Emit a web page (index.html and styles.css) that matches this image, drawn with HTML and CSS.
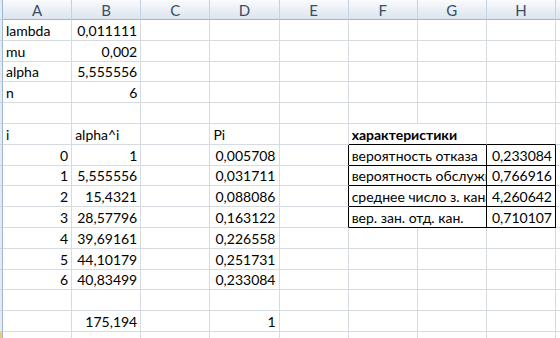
FILE: index.html
```html
<!DOCTYPE html>
<html lang="ru">
<head>
<meta charset="UTF-8" />
<title>Лист1</title>
<link rel="stylesheet" href="styles.css">
</head>
<body>
  <table class="sheet">
    <colgroup>
      <col class="col-rh">
      <col class="col"><col class="col"><col class="col"><col class="col">
      <col class="col"><col class="col"><col class="col"><col class="col">
      <col class="col">
    </colgroup>
    <thead>
      <tr>
        <th class="rh"></th>
        <th>A</th><th>B</th><th>C</th><th>D</th>
        <th>E</th><th>F</th><th>G</th><th>H</th><th></th>
      </tr>
    </thead>
    <tbody>
      <tr><td class="rh"></td><td>lambda</td><td class="n">0,011111</td><td></td><td></td><td></td><td></td><td></td><td></td><td></td></tr>
      <tr><td class="rh"></td><td>mu</td><td class="n">0,002</td><td></td><td></td><td></td><td></td><td></td><td></td><td></td></tr>
      <tr><td class="rh"></td><td>alpha</td><td class="n">5,555556</td><td></td><td></td><td></td><td></td><td></td><td></td><td></td></tr>
      <tr><td class="rh"></td><td>n</td><td class="n">6</td><td></td><td></td><td></td><td></td><td></td><td></td><td></td></tr>
      <tr><td class="rh"></td><td></td><td></td><td></td><td></td><td></td><td></td><td></td><td></td><td></td></tr>
      <tr><td class="rh"></td><td>i</td><td>alpha^i</td><td></td><td>Pi</td><td></td><td class="title bb" colspan="2">характеристики</td><td class="bb"></td><td></td></tr>
      <tr><td class="rh"></td><td class="n">0</td><td class="n">1</td><td></td><td class="n">0,005708</td><td class="br"></td><td class="box" colspan="2">вероятность отказа</td><td class="n box">0,233084</td><td></td></tr>
      <tr><td class="rh"></td><td class="n">1</td><td class="n">5,555556</td><td></td><td class="n">0,031711</td><td class="br"></td><td class="box" colspan="2">вероятность обслуживания</td><td class="n box">0,766916</td><td></td></tr>
      <tr><td class="rh"></td><td class="n">2</td><td class="n">15,4321</td><td></td><td class="n">0,088086</td><td class="br"></td><td class="box" colspan="2">среднее число з. каналов</td><td class="n box">4,260642</td><td></td></tr>
      <tr><td class="rh"></td><td class="n">3</td><td class="n">28,57796</td><td></td><td class="n">0,163122</td><td class="br"></td><td class="box" colspan="2">вер. зан. отд. кан.</td><td class="n box">0,710107</td><td></td></tr>
      <tr><td class="rh"></td><td class="n">4</td><td class="n">39,69161</td><td></td><td class="n">0,226558</td><td></td><td></td><td></td><td></td><td></td></tr>
      <tr><td class="rh"></td><td class="n">5</td><td class="n">44,10179</td><td></td><td class="n">0,251731</td><td></td><td></td><td></td><td></td><td></td></tr>
      <tr><td class="rh"></td><td class="n">6</td><td class="n">40,83499</td><td></td><td class="n">0,233084</td><td></td><td></td><td></td><td></td><td></td></tr>
      <tr><td class="rh"></td><td></td><td></td><td></td><td></td><td></td><td></td><td></td><td></td><td></td></tr>
      <tr><td class="rh"></td><td></td><td class="n">175,194</td><td></td><td class="n">1</td><td></td><td></td><td></td><td></td><td></td></tr>
      <tr><td class="rh active"></td><td></td><td></td><td></td><td></td><td></td><td></td><td></td><td></td><td></td></tr>
    </tbody>
  </table>
</body>
</html>
```

FILE: styles.css
```css
body {
  margin: 0;
  background: #fff;
  overflow: hidden;
  font-family: Lato, "Noto Sans", sans-serif;
  font-size: 14px;
  color: #000;
}
.sheet {
  table-layout: fixed;
  border-collapse: separate;
  border-spacing: 0;
  width: 625px;
}
.col-rh {
  width: 3px;
}
.col {
  width: 69.125px;
}
/* column letters */
.sheet th {
  height: 19px;
  padding: 0;
  font-weight: normal;
  font-size: 15px;
  color: #3b4d63;
  text-align: center;
  background: linear-gradient(#f9fbfd, #dde4ee);
  border-right: 1px solid #c6d2df;
  border-bottom: 1px solid #9eb6ce;
}
.sheet td {
  height: 19.8px;
  padding: 0 3px;
  white-space: nowrap;
  overflow: hidden;
  text-overflow: clip;
  vertical-align: bottom;
  line-height: 19px;
  border-right: 1px solid #d6dbe2;
  border-bottom: 1px solid #d6dbe2;
}
/* row header strip on the left edge */
.sheet .rh {
  padding: 0;
  background: #e4ebf5;
  border-right: 1px solid #9eb6ce;
  border-bottom-color: #c6d2df;
}
.sheet .rh.active {
  background: #f6c96f;
}
.sheet td.n {
  text-align: right;
}
.sheet td.title {
  font-weight: bold;
}
/* black frame around the characteristics block */
.sheet td.bb {
  border-bottom-color: #000;
}
.sheet td.br {
  border-right-color: #000;
}
.sheet td.box {
  border-right-color: #000;
  border-bottom-color: #000;
}
```
